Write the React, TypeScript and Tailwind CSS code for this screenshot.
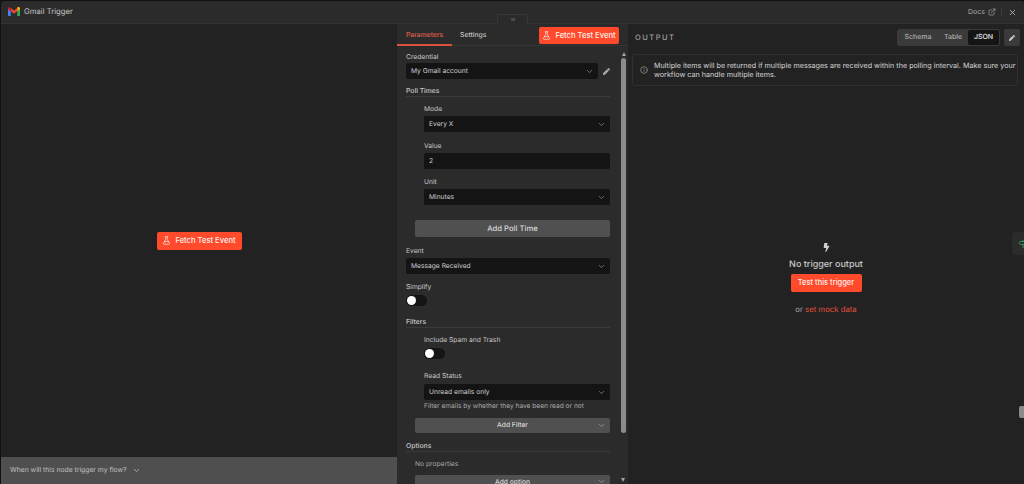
import { ChevronDown, ExternalLink, FlaskConical, Info, Signpost, X } from "lucide-react";
import { FaBolt, FaPen } from "react-icons/fa";

const font = "font-['Inter','Liberation_Sans',sans-serif] [text-rendering:geometricPrecision]";

function GmailLogo() {
  return (
    <svg width="12" height="9" viewBox="0 0 24 18">
      <path d="M0 3v13.5A1.5 1.5 0 0 0 1.5 18H5.5V8z" fill="#4285f4" />
      <path d="M24 3v13.5a1.5 1.5 0 0 1-1.5 1.5H18.5V8z" fill="#34a853" />
      <path d="M18.5 2v6.5L24 4.5V3c0-2.6-3-4-5-2.5z" fill="#fbbc04" />
      <path d="M5.5 8.500V2L12 7l6.500-5v6.500L12 13.500z" fill="#ea4335" />
      <path d="M0 3v1.500l5.500 4V2L5 1.500C3 0 0 .4 0 3z" fill="#c5221f" />
    </svg>
  );
}

function FetchButton({ className }: { className: string }) {
  return (
    <button className={`flex h-[17px] items-center justify-center gap-[4px] whitespace-nowrap rounded-[2px] bg-[#ff4a2b] text-[7.600px] font-medium text-[#fff0ec] ${className}`}>
      <FlaskConical size={9} strokeWidth={1.8} />
      Fetch Test Event
    </button>
  );
}

function Label({ text, className = "" }: { text: string; className?: string }) {
  return <div className={`h-[11px] text-[6.700px] leading-[13px] text-[#c8c8c8] ${className}`}>{text}</div>;
}

function Heading({ text, className = "" }: { text: string; className?: string }) {
  return (
    <div className={`h-[12px] border-b border-[#3a3a3a] text-[6.800px] font-medium leading-[11px] text-[#c8c8c8] ${className}`}>{text}</div>
  );
}

function Select({ value, className = "", chevron = true }: { value: string; className?: string; chevron?: boolean }) {
  return (
    <div className={`flex h-[16px] items-center justify-between rounded-[2px] bg-[#141414] pl-[5px] pr-[4px] text-[6.700px] text-[#d0d0d0] ${className}`}>
      {value}
      {chevron && <ChevronDown size={9} className="text-[#8c8c8c]" />}
    </div>
  );
}

function Toggle({ className = "" }: { className?: string }) {
  return (
    <div className={`flex h-[11px] w-[21px] items-center rounded-full bg-[#141414] pl-[1px] ${className}`}>
      <div className="h-[9px] w-[9px] rounded-full bg-white" />
    </div>
  );
}

function Params() {
  return (
    <div className="relative w-[231px] shrink-0 overflow-hidden bg-[#2b2b2b]">
      <div className="relative flex h-[22px] items-start border-b border-[#363636] text-[6.800px]">
        <div className="h-[22px] w-[55px] border-b-2 border-[#d9533f] pl-[9px] pt-[6px] font-medium text-[#e0604c]">Parameters</div>
        <div className="ml-[8px] pt-[6px] font-medium text-[#c4c4c4]">Settings</div>
        <FetchButton className="absolute left-[142px] top-[3px] w-[80px]" />
      </div>

      <div className="w-[213px] pl-[9px] pt-[5px]">
        <Label text="Credential" />
        <div className="mt-[1px] flex items-center">
          <Select value="My Gmail account" className="w-[193px]" />
          <FaPen size={7} className="ml-[5px] text-[#a8a8a8]" />
        </div>
        <Heading text="Poll Times" className="mt-[6px]" />
        <div className="pl-[18px]">
          <Label text="Mode" className="mt-[6px]" />
          <Select value="Every X" className="mt-[2px]" />
          <Label text="Value" className="mt-[8px]" />
          <Select value="2" chevron={false} className="mt-[2px]" />
          <Label text="Unit" className="mt-[7px]" />
          <Select value="Minutes" className="mt-[2px]" />
        </div>
        <div className="ml-[9px] mt-[15px] flex h-[17px] items-center justify-center rounded-[2px] bg-[#505050] text-[7.700px] font-medium text-[#d8d8d8]">
          Add Poll Time
        </div>
        <Label text="Event" className="mt-[8px]" />
        <Select value="Message Received" className="mt-[2px]" />
        <Label text="Simplify" className="mt-[7px]" />
        <Toggle className="mt-[3px]" />
        <Heading text="Filters" className="mt-[10px]" />
        <div className="pl-[18px]">
          <Label text="Include Spam and Trash" className="mt-[6px]" />
          <Toggle className="mt-[3px]" />
          <Label text="Read Status" className="mt-[11px]" />
          <Select value="Unread emails only" className="mt-[3px]" />
          <div className="mt-[1px] h-[11px] whitespace-nowrap text-[6.600px] leading-[11px] text-[#a8a8a8]">
            Filter emails by whether they have been read or not
          </div>
        </div>
        <div className="relative ml-[9px] mt-[6px] flex h-[15px] items-center justify-center rounded-[2px] bg-[#505050] text-[6.700px] font-medium text-[#d8d8d8]">
          Add Filter
          <ChevronDown size={9} className="absolute right-[4px] text-[#a0a0a0]" />
        </div>
        <Heading text="Options" className="mt-[7px]" />
        <div className="ml-[9px] mt-[7px] h-[11px] text-[6.700px] leading-[11px] text-[#a8a8a8]">No properties</div>
        <div className="relative ml-[9px] mt-[5px] flex h-[16px] items-start justify-center rounded-[2px] bg-[#505050] pt-[2px] text-[6.700px] font-medium text-[#d8d8d8]">
          Add option
          <ChevronDown size={9} className="absolute right-[4px] text-[#a0a0a0]" />
        </div>
      </div>

      {/* scrollbar */}
      <div className="absolute bottom-0 right-[2px] top-[22px] w-[5px]">
        <div className="mx-auto mt-[6px] h-0 w-0 border-x-[2.500px] border-b-[4px] border-x-transparent border-b-[#a0a0a0]" />
        <div className="mt-[2px] h-[375px] rounded-full bg-[#8c8c8c]" />
        <div className="absolute bottom-[2px] left-0 h-0 w-0 border-x-[2.500px] border-t-[4px] border-x-transparent border-t-[#a0a0a0]" />
      </div>
    </div>
  );
}

function Output() {
  return (
    <div className="relative flex min-w-0 flex-1 flex-col bg-[#222222] pl-[4px] pr-[4px]">
      <div className="flex items-center justify-between pl-[3px] pt-[5px]">
        <div className="text-[7.500px] font-medium tracking-[0.2em] text-[#a0a0a0]">OUTPUT</div>
        <div className="flex gap-[4px]">
          <div className="flex h-[17px] w-[103px] items-center rounded-[3px] bg-[#3a3a3a] p-[1px] text-[7px] font-medium text-[#b0b0b0]">
            <span className="w-[40px] text-center">Schema</span>
            <span className="w-[30px] text-center">Table</span>
            <span className="flex h-full w-[31px] items-center justify-center rounded-[2px] bg-[#141414] text-[#e8e8e8]">JSON</span>
          </div>
          <div className="flex h-[17px] w-[16px] items-center justify-center rounded-[2px] bg-[#3a3a3a] text-[#c8c8c8]">
            <FaPen size={6} />
          </div>
        </div>
      </div>
      <div className="mr-[2px] mt-[8px] flex h-[32px] items-center rounded-[3px] border border-[#303030] pl-[7px] text-[7.200px] leading-[9px] text-[#d4d4d4]">
        <Info size={8} className="shrink-0 text-[#a0a0a0]" />
        <div className="ml-[6px] whitespace-nowrap">
          Multiple items will be returned if multiple messages are received within the polling interval. Make sure your<br />
          workflow can handle multiple items.
        </div>
      </div>
      <div className="flex flex-col items-center pt-[157px]">
        <FaBolt size={9} className="text-[#d0d0d0]" />
        <div className="mt-[7px] text-[9px] font-medium leading-[12px] text-[#c8c8c8]">No trigger output</div>
        <button className="mt-[3px] flex h-[18px] w-[71px] items-center justify-center rounded-[2px] bg-[#ff4a2b] text-[7.500px] font-medium text-[#fff0ec]">
          Test this trigger
        </button>
        <div className="mt-[12px] text-[7.750px] leading-[11px] text-[#a8a8a8]">
          or <span className="text-[#e0503c]">set mock data</span>
        </div>
      </div>
      {/* floating side tabs */}
      <div className="absolute right-0 top-[208px] flex h-[23px] w-[12px] items-center rounded-l-[4px] bg-[#2b2b2b] pl-[6px]">
        <Signpost size={10} className="shrink-0 text-[#2fa36b]" />
      </div>
      <div className="absolute right-0 top-[382px] h-[12px] w-[5px] rounded-l-[2px] bg-[#8a8a8a]" />
    </div>
  );
}

export default function App() {
  return (
    <div className={`relative flex h-[484px] w-[1024px] flex-col overflow-hidden bg-[#111111] pl-[1px] pt-[1px] ${font}`}>
      <div className="relative z-10 flex h-[23px] shrink-0 items-center justify-between rounded-t-[3px] border-b border-[#333333] bg-[#2b2b2b] pl-[7px] pr-[7px]">
        <div className="flex items-center gap-[4px] text-[7.700px] text-[#c4c4c4]">
          <GmailLogo />
          Gmail Trigger
        </div>
        <div className="flex items-center text-[7px] text-[#a8a8a8]">
          Docs
          <ExternalLink size={8} className="ml-[3px]" />
          <div className="ml-[5px] mr-[6px] h-[9px] w-px bg-[#3d3d3d]" />
          <X size={9} className="text-[#c8c8c8]" />
        </div>
      </div>
      <div className="absolute left-[497px] top-[14px] z-20 flex h-[10px] w-[31px] items-center justify-center rounded-t-[3px] border border-b-0 border-[#383838] bg-[#2b2b2b]">
        <div className="h-[3px] w-[4px] bg-[#4a4a4a]" />
      </div>
      <div className="flex min-h-0 flex-1">
        <div className="flex w-[396px] shrink-0 flex-col bg-[#222222]">
          <div className="flex flex-1 items-center justify-center">
            <FetchButton className="h-[18px] w-[85px]" />
          </div>
          <div className="flex h-[27px] items-center gap-[4px] bg-[#4f4f4f] pl-[9px] text-[6.800px] text-[#c0c0c0]">
            When will this node trigger my flow?
            <ChevronDown size={9} className="ml-[1px]" />
          </div>
        </div>
        <Params />
        <Output />
      </div>
    </div>
  );
}
